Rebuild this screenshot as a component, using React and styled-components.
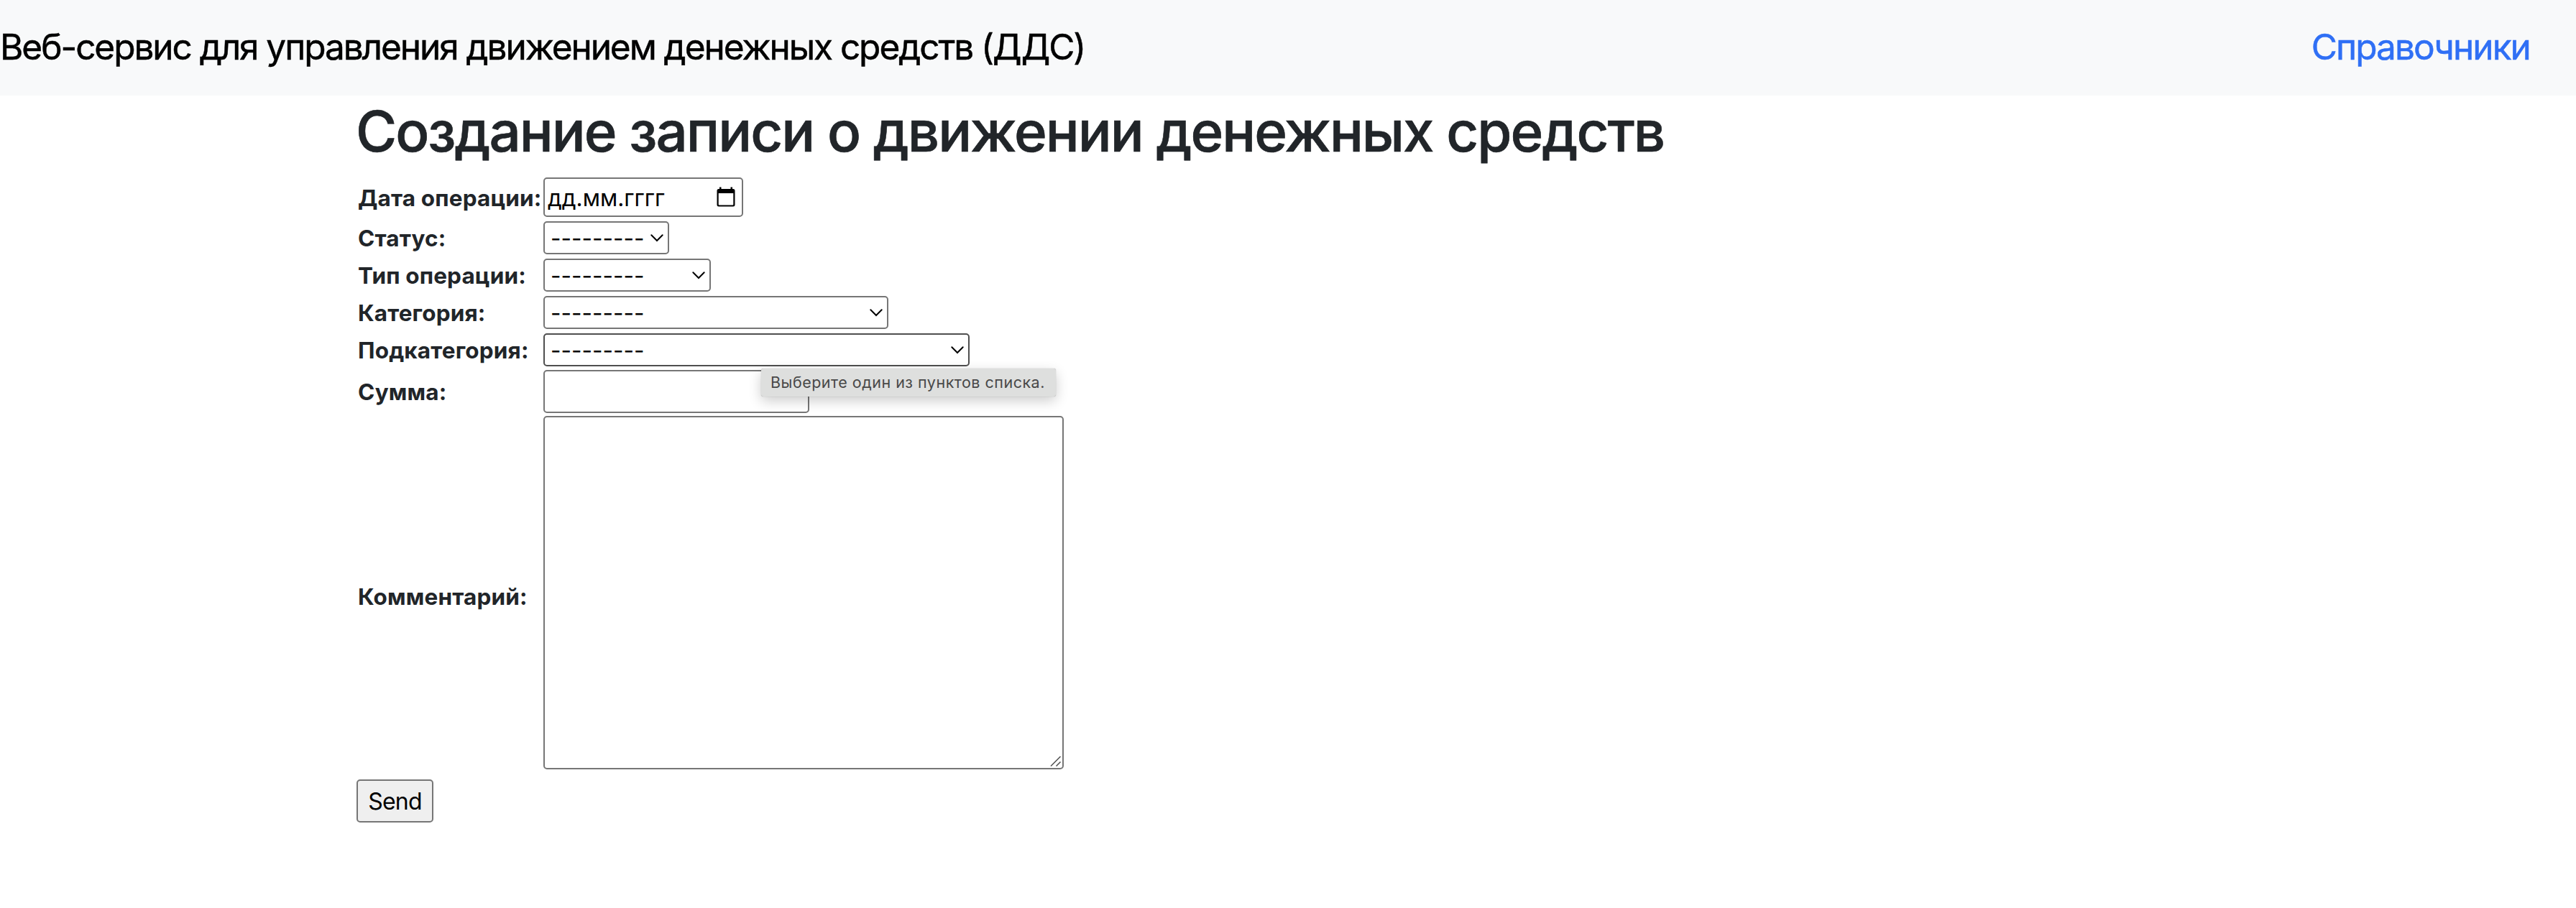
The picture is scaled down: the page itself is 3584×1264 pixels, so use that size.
import React from 'react';
import styled, { createGlobalStyle } from 'styled-components';

const GlobalStyle = createGlobalStyle`
  *, *::before, *::after { box-sizing: border-box; }
  body {
    margin: 0;
    background: #fff;
    color: #212529;
    font-family: Inter, "Liberation Sans", sans-serif;
    font-size: 31.5px;
  }
`;

const Navbar = styled.nav`
  display: flex;
  align-items: center;
  justify-content: space-between;
  height: 133px;
  padding: 0 64px 4px 0;
  background: #f8f9fa;
  font-size: 49.5px;
  line-height: 60px;
  white-space: nowrap;
  -webkit-text-stroke: 0.5px currentColor;
`;

const Brand = styled.span`
  color: #000;
  letter-spacing: -2.05px;
`;

const NavLink = styled.a`
  color: #2f6ff5;
  text-decoration: none;
  letter-spacing: -1.9px;
`;

const Container = styled.main`
  width: 2592px;
  margin: 0 auto;
`;

const Title = styled.h1`
  margin: 0 0 0 -1px;
  padding-top: 2px;
  height: 114px;
  font-size: 78px;
  font-weight: 500;
  line-height: 96px;
  letter-spacing: -2px;
  white-space: nowrap;
  -webkit-text-stroke: 0.6px currentColor;
`;

const Row = styled.div`
  display: grid;
  grid-template-columns: 260px 1fr;
  align-items: center;
  height: ${(p) => p.$height}px;
  margin-top: ${(p) => p.$gap ?? 6}px;
`;

const Label = styled.label`
  padding-left: 2px;
  padding-top: ${(p) => p.$drop || 1}px;
  font-weight: 700;
  line-height: 38px;
  letter-spacing: 0.15px;
  white-space: nowrap;
`;

const Field = styled.div`
  position: relative;
  width: ${(p) => p.$width}px;
  height: 100%;
`;

const control = `
  display: block;
  width: 100%;
  height: 100%;
  margin: 0;
  border: 2px solid #767676;
  border-radius: 5px;
  background: #fff;
  color: #000;
  font: inherit;
  outline: none;
  appearance: none;
`;

const Input = styled.input`
  ${control}
  padding: 2px 4px 0;
  &::placeholder { color: #000; opacity: 1; }
`;

const Select = styled.select`
  ${control}
  padding: 0 8px;
  border-color: ${(p) => (p.$hovered ? '#4f4f4f' : '#767676')};
`;

const TextArea = styled.textarea`
  ${control}
  resize: none;
`;

const Chevron = styled.svg`
  position: absolute;
  right: 7px;
  top: 17px;
  pointer-events: none;
`;

const CalendarIcon = styled.svg`
  position: absolute;
  right: 11px;
  top: 13px;
`;

const Grip = styled.svg`
  position: absolute;
  right: 2px;
  bottom: 2px;
`;

const Tooltip = styled.div`
  position: absolute;
  z-index: 1;
  left: 303px;
  top: 49px;
  width: 410px;
  height: 39px;
  padding-left: 13px;
  border-radius: 3px;
  background: #dedfde;
  box-shadow: 0 0 1px rgba(0, 0, 0, 0.4), 0 6px 18px rgba(0, 0, 0, 0.2);
  color: #484848;
  font-size: 21.5px;
  line-height: 38px;
  letter-spacing: 0.5px;
  white-space: nowrap;
`;

const SendButton = styled.button`
  display: block;
  width: 107px;
  height: 60px;
  margin-top: 14px;
  padding: 0;
  border: 2px solid #767676;
  border-radius: 5px;
  background: #efefef;
  color: #000;
  font: inherit;
  font-size: 32px;
  letter-spacing: -0.8px;
`;

function SelectField({ id, width, hovered, children }) {
  return (
    <Field $width={width}>
      <Select id={id} $hovered={hovered}>
        <option>---------</option>
      </Select>
      <Chevron width="20" height="14" viewBox="0 0 20 14">
        <path d="M2.3 2.3 L10 10 L17.7 2.3" fill="none" stroke="#000" strokeWidth="2" strokeLinecap="round" />
      </Chevron>
      {children}
    </Field>
  );
}

export default function App() {
  return (
    <>
      <GlobalStyle />
      <Navbar>
        <Brand>Веб-сервис для управления движением денежных средств (ДДС)</Brand>
        <NavLink href="#">Справочники</NavLink>
      </Navbar>
      <Container>
        <Title>Создание записи о движении денежных средств</Title>
        <form>
          <Row $height={55} $gap={0}>
            <Label htmlFor="date" $drop={2}>Дата операции:</Label>
            <Field $width={278}>
              <Input id="date" placeholder="дд.мм.гггг" />
              <CalendarIcon width="26" height="28" viewBox="0 0 26 28">
                <path d="M4 0.5h2.5v2.5h13V0.5H22v2.5h1a2.5 2.5 0 0 1 2.5 2.5v19.5a2.5 2.5 0 0 1-2.5 2.5h-20a2.5 2.5 0 0 1-2.5-2.5V5.5a2.5 2.5 0 0 1 2.5-2.5h1zM2.7 9v15.6a1 1 0 0 0 1 1h18.6a1 1 0 0 0 1-1V9z" fill="#000" fillRule="evenodd" />
              </CalendarIcon>
            </Field>
          </Row>
          <Row $height={46}>
            <Label htmlFor="status">Статус:</Label>
            <SelectField id="status" width={175} />
          </Row>
          <Row $height={46}>
            <Label htmlFor="type">Тип операции:</Label>
            <SelectField id="type" width={233} />
          </Row>
          <Row $height={46}>
            <Label htmlFor="category">Категория:</Label>
            <SelectField id="category" width={480} />
          </Row>
          <Row $height={46}>
            <Label htmlFor="subcategory">Подкатегория:</Label>
            <SelectField id="subcategory" width={593} hovered>
              <Tooltip role="tooltip">Выберите один из пунктов списка.</Tooltip>
            </SelectField>
          </Row>
          <Row $height={60} $gap={5}>
            <Label htmlFor="amount">Сумма:</Label>
            <Field $width={370}>
              <Input id="amount" />
            </Field>
          </Row>
          <Row $height={492} $gap={4}>
            <Label htmlFor="comment" $drop={12}>Комментарий:</Label>
            <Field $width={724}>
              <TextArea id="comment" />
              <Grip width="18" height="18" viewBox="0 0 18 18">
                <path d="M2 15.5L15.5 2M9.5 15.5L15.5 9.5" fill="none" stroke="#555" strokeWidth="1.6" />
              </Grip>
            </Field>
          </Row>
          <SendButton type="button">Send</SendButton>
        </form>
      </Container>
    </>
  );
}
